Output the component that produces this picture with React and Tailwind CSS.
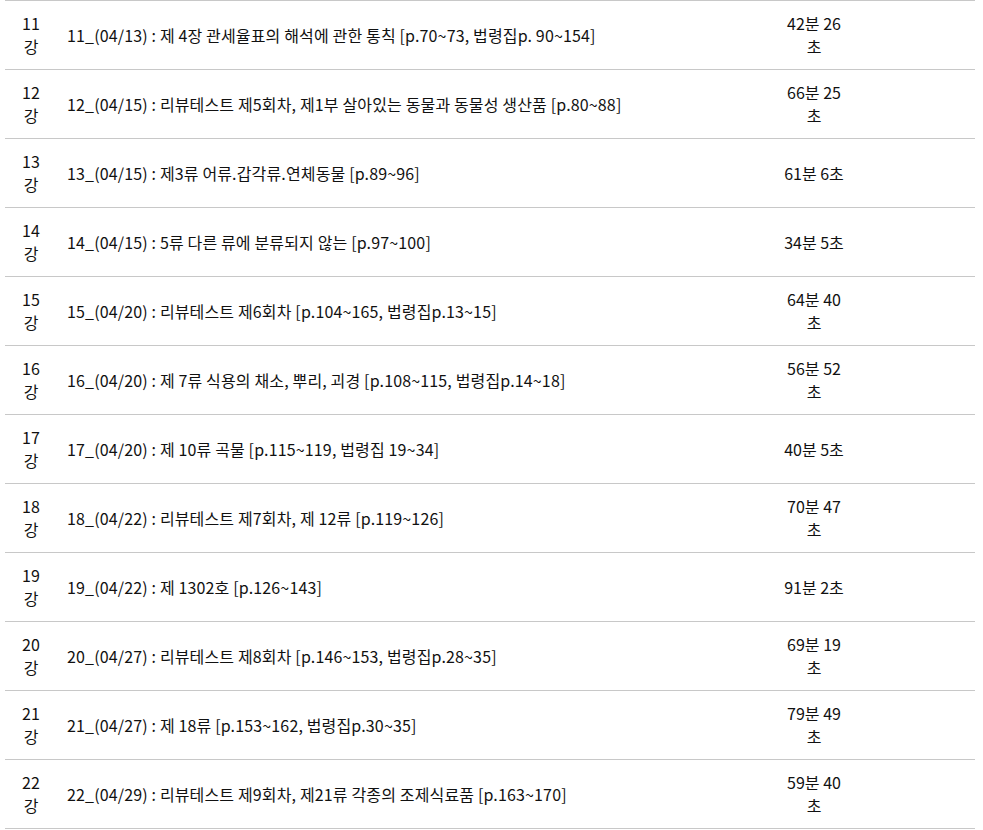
const lectures = [
  { no: 11, title: '11_(04/13) : 제 4장 관세율표의 해석에 관한 통칙 [p.70~73, 법령집p. 90~154]', time: '42분 26초' },
  { no: 12, title: '12_(04/15) : 리뷰테스트 제5회차, 제1부 살아있는 동물과 동물성 생산품 [p.80~88]', time: '66분 25초' },
  { no: 13, title: '13_(04/15) : 제3류 어류.갑각류.연체동물 [p.89~96]', time: '61분 6초' },
  { no: 14, title: '14_(04/15) : 5류 다른 류에 분류되지 않는 [p.97~100]', time: '34분 5초' },
  { no: 15, title: '15_(04/20) : 리뷰테스트 제6회차 [p.104~165, 법령집p.13~15]', time: '64분 40초' },
  { no: 16, title: '16_(04/20) : 제 7류 식용의 채소, 뿌리, 괴경 [p.108~115, 법령집p.14~18]', time: '56분 52초' },
  { no: 17, title: '17_(04/20) : 제 10류 곡물 [p.115~119, 법령집 19~34]', time: '40분 5초' },
  { no: 18, title: '18_(04/22) : 리뷰테스트 제7회차, 제 12류 [p.119~126]', time: '70분 47초' },
  { no: 19, title: '19_(04/22) : 제 1302호 [p.126~143]', time: '91분 2초' },
  { no: 20, title: '20_(04/27) : 리뷰테스트 제8회차 [p.146~153, 법령집p.28~35]', time: '69분 19초' },
  { no: 21, title: '21_(04/27) : 제 18류 [p.153~162, 법령집p.30~35]', time: '79분 49초' },
  { no: 22, title: '22_(04/29) : 리뷰테스트 제9회차, 제21류 각종의 조제식료품 [p.163~170]', time: '59분 40초' },
];

export default function App() {
  return (
    <div className="min-h-[830px] bg-white pl-[5px] pr-[8px] font-['Noto_Sans_CJK_KR','Noto_Sans',sans-serif] text-[16px] leading-[23px] text-[#111]">
      <table className="w-[970px] table-fixed border-collapse border-t border-[#c8c8c8]">
        <colgroup>
          <col className="w-[52px]" />
          <col className="w-[716px]" />
          <col className="w-[82px]" />
          <col />
        </colgroup>
        <tbody>
          {lectures.map((l) => (
            <tr key={l.no} className="h-[69px] border-b border-[#c8c8c8]">
              <td className="px-[12px] text-center align-middle">{l.no}강</td>
              <td className="pl-[10px] pr-2 align-middle tracking-[0.15px]">{l.title}</td>
              <td className="px-[10px] text-center align-middle">{l.time}</td>
              <td />
            </tr>
          ))}
        </tbody>
      </table>
    </div>
  );
}
